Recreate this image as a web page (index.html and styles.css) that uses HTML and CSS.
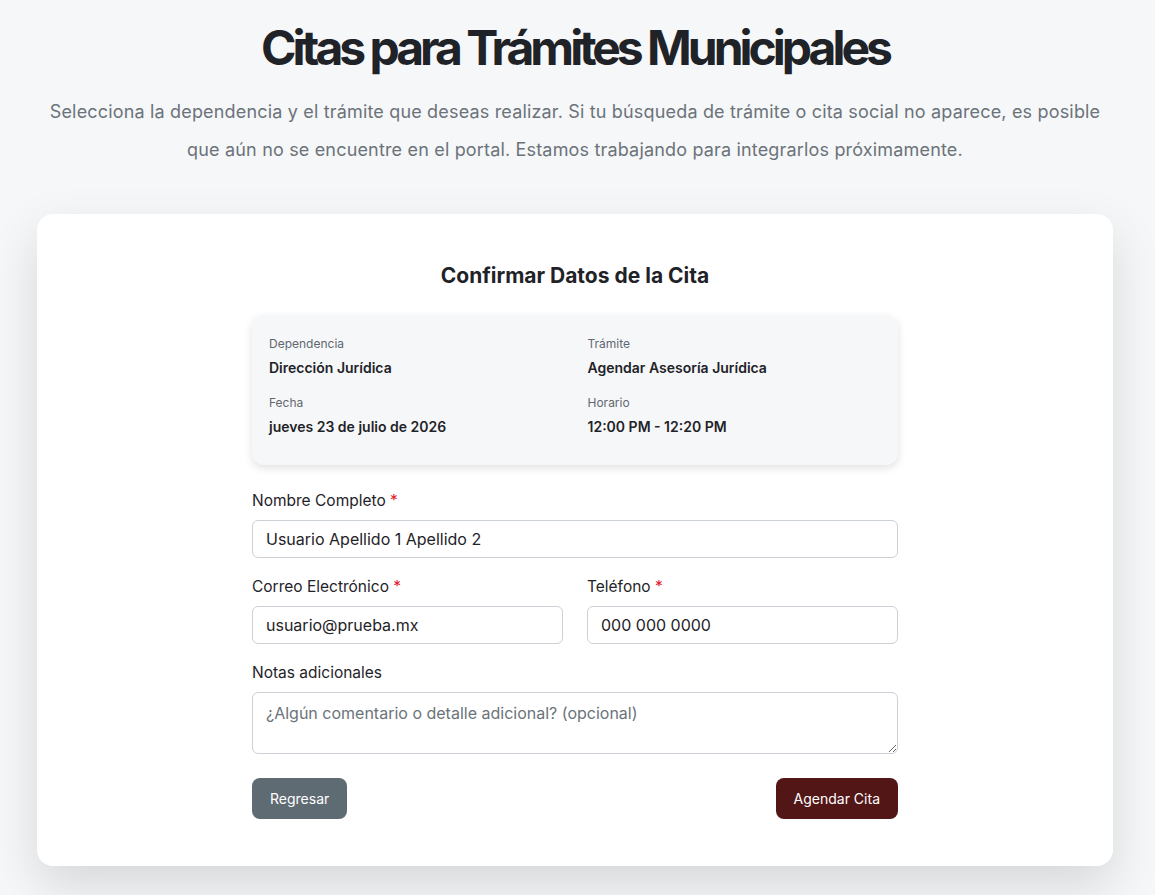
FILE: index.html
```html
<!DOCTYPE html>
<html lang="es">
<head>
    <meta charset="UTF-8">
    <meta name="viewport" content="width=device-width, initial-scale=1.0">
    <title>Citas para Trámites Municipales</title>
    <link rel="stylesheet" href="styles.css">
</head>
<body>
    <main class="page">
        <header class="intro">
            <h1>Citas para Trámites Municipales</h1>
            <p>Selecciona la dependencia y el trámite que deseas realizar. Si tu búsqueda de trámite o cita social no aparece, es posible que aún no se encuentre en el portal. Estamos trabajando para integrarlos próximamente.</p>
        </header>

        <section class="card">
            <div class="confirm">
                <h2>Confirmar Datos de la Cita</h2>

                <!-- Resumen de la cita -->
                <div class="summary">
                    <div class="summary-item">
                        <span class="summary-label">Dependencia</span>
                        <span class="summary-value">Dirección Jurídica</span>
                    </div>
                    <div class="summary-item">
                        <span class="summary-label">Trámite</span>
                        <span class="summary-value">Agendar Asesoría Jurídica</span>
                    </div>
                    <div class="summary-item">
                        <span class="summary-label">Fecha</span>
                        <span class="summary-value">jueves 23 de julio de 2026</span>
                    </div>
                    <div class="summary-item">
                        <span class="summary-label">Horario</span>
                        <span class="summary-value">12:00 PM - 12:20 PM</span>
                    </div>
                </div>

                <form class="appointment-form">
                    <div class="field">
                        <label for="nombre">Nombre Completo <span class="required">*</span></label>
                        <input type="text" id="nombre" value="Usuario Apellido 1 Apellido 2">
                    </div>
                    <div class="field-row">
                        <div class="field">
                            <label for="correo">Correo Electrónico <span class="required">*</span></label>
                            <input type="email" id="correo" value="usuario@prueba.mx">
                        </div>
                        <div class="field">
                            <label for="telefono">Teléfono <span class="required">*</span></label>
                            <input type="tel" id="telefono" value="000 000 0000">
                        </div>
                    </div>
                    <div class="field">
                        <label for="notas">Notas adicionales</label>
                        <textarea id="notas" placeholder="¿Algún comentario o detalle adicional? (opcional)"></textarea>
                    </div>
                    <div class="actions">
                        <button type="button" class="btn btn-back">Regresar</button>
                        <button type="submit" class="btn btn-primary">Agendar Cita</button>
                    </div>
                </form>
            </div>
        </section>
    </main>
</body>
</html>
```

FILE: styles.css
```css
* {
    margin: 0;
    padding: 0;
    box-sizing: border-box;
}

body {
    font-family: Inter, "Noto Sans", sans-serif;
    background-color: #f6f7f9;
    color: #1f2328;
}

.page {
    padding: 24px 42px 40px 37px;
}

.intro {
    text-align: center;
}

.intro h1 {
    font-size: 48px;
    line-height: 48px;
    font-weight: 700;
    letter-spacing: -4px;
    color: #1f2328;
}

.intro p {
    margin: 21px auto 0;
    max-width: 1070px;
    font-size: 18px;
    line-height: 38px;
    letter-spacing: 0.17px;
    color: #6b7379;
}

.card {
    margin-top: 45px;
    background-color: #fff;
    border-radius: 16px;
    padding: 48px 0 47px;
    box-shadow: 0 20px 50px rgba(0, 0, 0, 0.13);
}

.confirm {
    width: 646px;
    margin: 0 auto;
}

.confirm h2 {
    text-align: center;
    font-size: 21px;
    line-height: 28px;
    font-weight: 700;
    margin-bottom: 25px;
}

.summary {
    display: grid;
    grid-template-columns: 1fr 1fr;
    column-gap: 24px;
    row-gap: 17px;
    background-color: #f6f7f9;
    border-radius: 12px;
    padding: 21px 16px 28px 17px;
    box-shadow: 0 3px 8px rgba(0, 0, 0, 0.12);
    margin-bottom: 24px;
}

.summary-item {
    display: flex;
    flex-direction: column;
}

.summary-label {
    font-size: 12px;
    line-height: 16px;
    color: #5f6870;
    margin-bottom: 6px;
}

.summary-value {
    font-size: 14px;
    line-height: 20px;
    font-weight: 600;
    color: #1f2328;
}

.field-row {
    display: flex;
    gap: 24px;
}

.field-row .field {
    flex: 1;
}

.field {
    margin-bottom: 17px;
}

.field label {
    display: block;
    font-size: 15.5px;
    line-height: 24px;
    margin-bottom: 7px;
    color: #1f2328;
}

.required {
    color: #e5172d;
}

.field input,
.field textarea {
    display: block;
    width: 100%;
    font-family: Inter, "Noto Sans", sans-serif;
    font-size: 16px;
    color: #1f2328;
    border: 1px solid #ccd1d7;
    border-radius: 6px;
    background-color: #fff;
    padding: 0 13px;
}

.field input {
    height: 38px;
}

.field textarea {
    height: 62px;
    padding-top: 10px;
    line-height: 20px;
}

.field textarea::placeholder {
    color: #6b7379;
}

.actions {
    display: flex;
    justify-content: space-between;
    margin-top: 24px;
}

.btn {
    font-family: Inter, "Noto Sans", sans-serif;
    font-size: 14px;
    color: #fff;
    border: none;
    border-radius: 8px;
    height: 41px;
    padding: 0 18px;
    cursor: pointer;
}

.btn-back {
    background-color: #5f6b73;
}

.btn-primary {
    background-color: #521616;
}
```
